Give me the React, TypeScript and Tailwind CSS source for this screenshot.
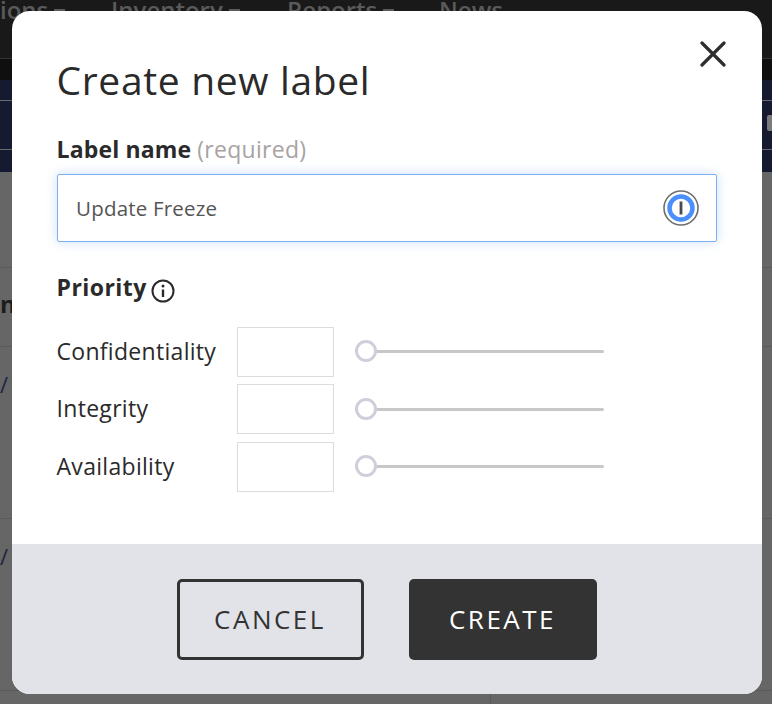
import React from 'react';

const font = { fontFamily: '"Open Sans", sans-serif' };

const NavItem = ({ label, caret = true }: { label: string; caret?: boolean }) => (
	<span className="flex items-start">
		{label}
		{caret && <span className="ml-[6px] mt-[9px] w-[11px] h-[2px] bg-[#5a5a5a]" />}
	</span>
);

const Priority = ({ label }: { label: string }) => (
	<div className="flex items-center h-[50px]">
		<span className="-ml-[0.5px] w-[180.5px] -mt-[1px] text-[23px] text-[#2a2a2a] tracking-[0.3px]">{label}</span>
		<input className="w-[97px] h-[50px] border border-[#dcdce0] bg-white outline-none" />
		<div className="relative ml-[21px] w-[249px] h-[3px] bg-[#c8c8c8] rounded-full">
			<div className="absolute left-0 top-[-10px] w-[22px] h-[22px] rounded-full border-[3px] border-[#cfcfdb] bg-white" />
		</div>
	</div>
);

export default function App() {
	return (
		<div className="relative w-[772px] h-[704px] overflow-hidden bg-[#666666]" style={font}>
			{/* page behind the dimmed overlay */}
			<div className="flex flex-col">
				<div className="h-[59px] bg-[#191919] border-b border-[#333333] flex items-start text-[24px] leading-[20px] font-semibold text-[#5a5a5a]">
					<div className="w-[111px]"><NavItem label="ions" /></div>
					<div className="w-[176px]"><NavItem label="Inventory" /></div>
					<div className="w-[152px]"><NavItem label="Reports" /></div>
					<NavItem label="News" caret={false} />
				</div>
				<div className="h-[21px] bg-[#0f0f0f]" />
				<div className="h-[92px] bg-[#161a30] flex flex-col">
					<div className="h-[21px] border-b border-[#6a6a6a]" />
					<div className="h-[49px] border-b border-[#6a6a6a] flex justify-end items-center">
						<div className="mb-[4px] w-[5px] h-[16px] bg-[#7a7a7a] rounded-l-[2px]" />
					</div>
				</div>
				<div className="h-[96px] border-b border-[#5a5a5a]" />
				<div className="h-[79px] border-b border-[#5a5a5a] pb-[6px] flex items-center text-[24px] font-bold text-[#1c1c1c]">n,</div>
				<div className="h-[172px] border-b border-[#5a5a5a] pt-[22px] text-[22px] leading-[30px] text-[#1c2540]">/</div>
				<div className="h-[172px] border-b border-[#5a5a5a] pt-[22px] text-[22px] leading-[30px] text-[#1c2540]">/</div>
				<div className="ml-[490px] h-[13px] border-l border-[#5a5a5a]" />
			</div>

			<div className="absolute left-[12px] top-[11px] w-[750px] h-[683px] bg-white rounded-[18px] overflow-hidden flex flex-col">
				<div className="flex-1 px-[45px] pt-[41px] relative">
					<button className="absolute right-[36px] top-[30px] w-[26px] h-[26px] text-[#2e2e2e]">
						<svg viewBox="0 0 26 26" className="w-[26px] h-[26px]" fill="none" stroke="currentColor" strokeWidth="3.2" strokeLinecap="round">
							<path d="M2 2 L24 24 M24 2 L2 24" />
						</svg>
					</button>
					<h1 className="-ml-[0.5px] text-[39px] leading-[56px] text-[#2a2a2a] tracking-[0.66px]">Create new label</h1>
					<div className="-ml-[0.5px] mt-[26px] text-[23px] leading-[30px]">
						<span className="font-bold text-[#2a2a2a] tracking-[0.15px]">Label name</span>{' '}
						<span className="text-[#a8a3a3] tracking-[0.3px]">(required)</span>
					</div>
					<div className="relative mt-[10px] w-[660px] h-[68px] border border-[#7fb0ee] rounded-[2px] shadow-[0_0_12px_rgba(127,176,238,0.4)] flex items-center pl-[18px] pr-[17px]">
						<input
							readOnly
							value="Update Freeze"
							className="flex-1 text-[20.5px] text-[#555555] bg-transparent outline-none tracking-[0.2px]"
						/>
						<svg viewBox="0 0 36 36" className="w-[36px] h-[36px]">
							<circle cx="18" cy="18" r="17" fill="white" stroke="#6e6e6e" strokeWidth="1.6" />
							<circle cx="18" cy="18" r="11.5" fill="white" stroke="#4b8ffb" strokeWidth="4.5" />
							<rect x="16.6" y="11.5" width="2.8" height="13" fill="#4a4a4a" />
						</svg>
					</div>
					<div className="-ml-[0.5px] mt-[27px] flex items-center h-[36px]">
						<span className="text-[23px] font-bold text-[#2a2a2a] tracking-[0.45px]">Priority</span>
						<svg viewBox="0 0 24 24" className="ml-[4px] mt-[7px] w-[24px] h-[24px]" fill="none" stroke="#2a2a2a" strokeWidth="2">
							<circle cx="12" cy="12" r="10.5" />
							<path d="M12 10.5 V18" strokeWidth="2.4" />
							<circle cx="12" cy="7" r="1.5" fill="#2a2a2a" stroke="none" />
						</svg>
					</div>
					<div className="mt-[21.6px] flex flex-col gap-[7.5px]">
						<Priority label="Confidentiality" />
						<Priority label="Integrity" />
						<Priority label="Availability" />
					</div>
				</div>
				<div className="h-[150px] bg-[#e2e3e8] flex justify-center items-start pt-[35px] gap-[45px] pr-[1px]">
					<button className="w-[187px] h-[81px] border-[3px] border-[#333333] rounded-[5px] text-[26px] font-medium tracking-[2.5px] text-[#333333]">CANCEL</button>
					<button className="w-[188px] h-[81px] bg-[#333333] rounded-[5px] text-[26px] font-medium tracking-[2.5px] text-white">CREATE</button>
				</div>
			</div>
		</div>
	);
}
